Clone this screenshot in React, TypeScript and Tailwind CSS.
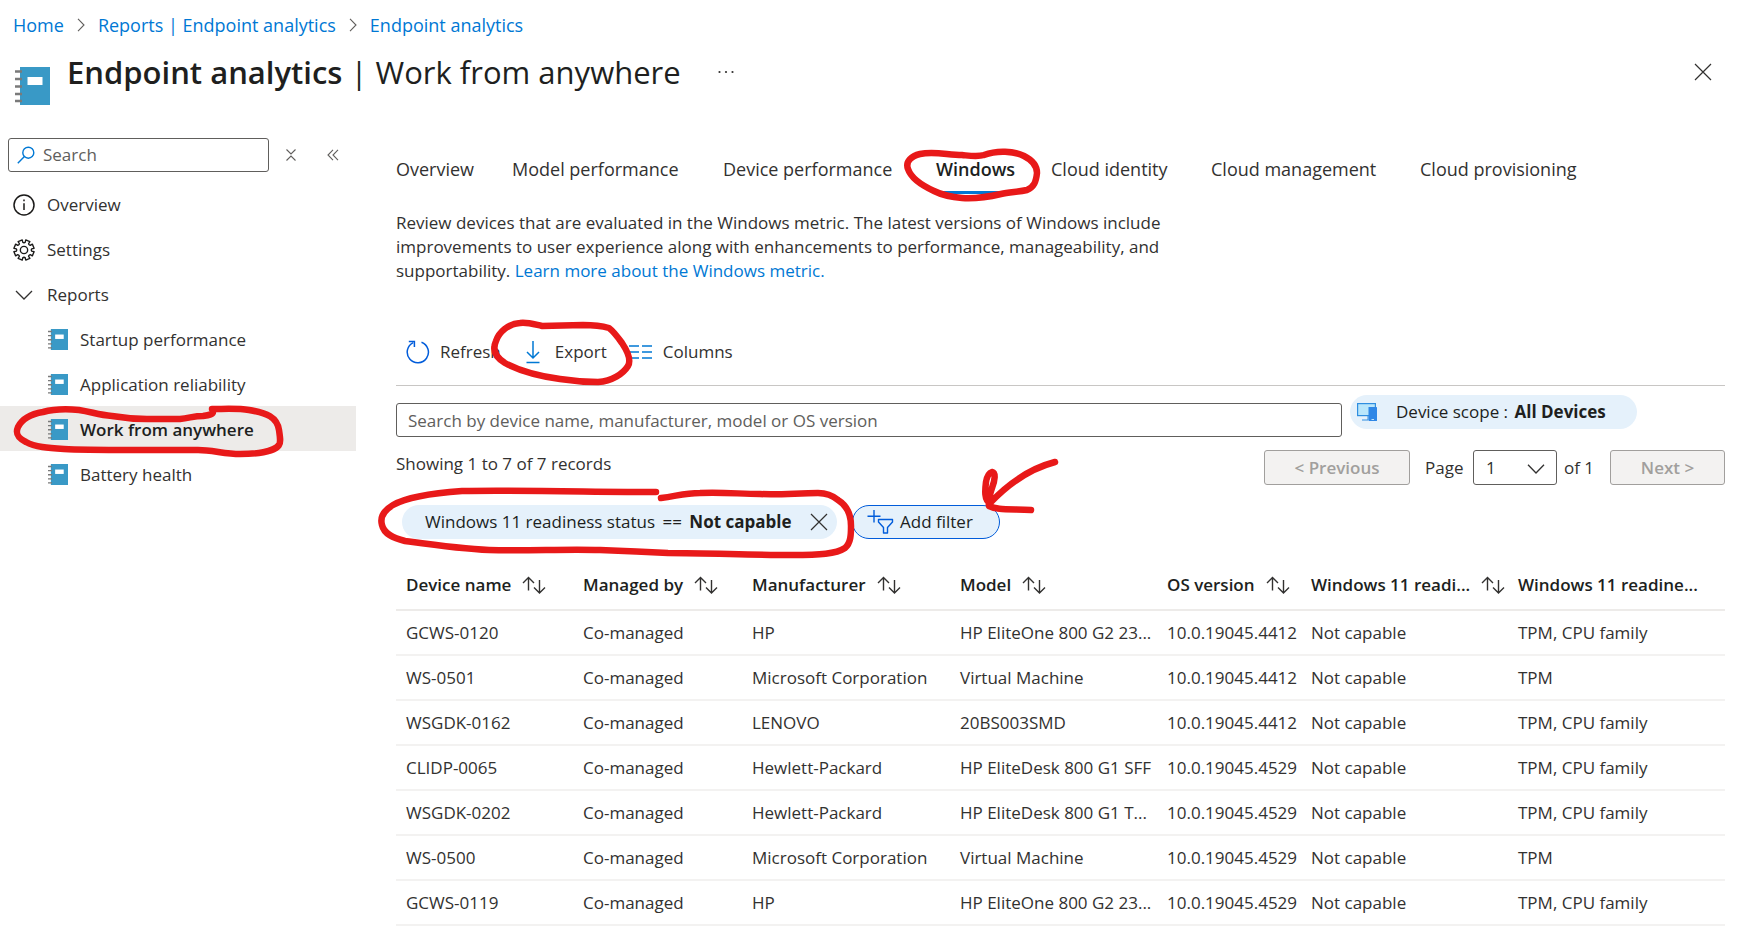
import { useState } from "react";
import type { ReactNode } from "react";
import clsx from "clsx";

type Device = {
  name: string;
  managedBy: string;
  manufacturer: string;
  model: string;
  osVersion: string;
  readiness: string;
  reason: string;
};

const devices: Device[] = [
  {
    name: "GCWS-0120",
    managedBy: "Co-managed",
    manufacturer: "HP",
    model: "HP EliteOne 800 G2 23...",
    osVersion: "10.0.19045.4412",
    readiness: "Not capable",
    reason: "TPM, CPU family",
  },
  {
    name: "WS-0501",
    managedBy: "Co-managed",
    manufacturer: "Microsoft Corporation",
    model: "Virtual Machine",
    osVersion: "10.0.19045.4412",
    readiness: "Not capable",
    reason: "TPM",
  },
  {
    name: "WSGDK-0162",
    managedBy: "Co-managed",
    manufacturer: "LENOVO",
    model: "20BS003SMD",
    osVersion: "10.0.19045.4412",
    readiness: "Not capable",
    reason: "TPM, CPU family",
  },
  {
    name: "CLIDP-0065",
    managedBy: "Co-managed",
    manufacturer: "Hewlett-Packard",
    model: "HP EliteDesk 800 G1 SFF",
    osVersion: "10.0.19045.4529",
    readiness: "Not capable",
    reason: "TPM, CPU family",
  },
  {
    name: "WSGDK-0202",
    managedBy: "Co-managed",
    manufacturer: "Hewlett-Packard",
    model: "HP EliteDesk 800 G1 T...",
    osVersion: "10.0.19045.4529",
    readiness: "Not capable",
    reason: "TPM, CPU family",
  },
  {
    name: "WS-0500",
    managedBy: "Co-managed",
    manufacturer: "Microsoft Corporation",
    model: "Virtual Machine",
    osVersion: "10.0.19045.4529",
    readiness: "Not capable",
    reason: "TPM",
  },
  {
    name: "GCWS-0119",
    managedBy: "Co-managed",
    manufacturer: "HP",
    model: "HP EliteOne 800 G2 23...",
    osVersion: "10.0.19045.4529",
    readiness: "Not capable",
    reason: "TPM, CPU family",
  },
];

const columns: { key: keyof Device; label: string; width: string; sortable: boolean }[] = [
  { key: "name", label: "Device name", width: "w-[177px]", sortable: true },
  { key: "managedBy", label: "Managed by", width: "w-[169px]", sortable: true },
  { key: "manufacturer", label: "Manufacturer", width: "w-[208px]", sortable: true },
  { key: "model", label: "Model", width: "w-[207px]", sortable: true },
  { key: "osVersion", label: "OS version", width: "w-[144px]", sortable: true },
  { key: "readiness", label: "Windows 11 readi...", width: "w-[207px]", sortable: true },
  { key: "reason", label: "Windows 11 readine...", width: "", sortable: false },
];

const tabs = [
  { label: "Overview", width: "w-[116px]" },
  { label: "Model performance", width: "w-[211px]" },
  { label: "Device performance", width: "w-[213px]" },
  { label: "Windows", width: "w-[115px]" },
  { label: "Cloud identity", width: "w-[160px]" },
  { label: "Cloud management", width: "w-[209px]" },
  { label: "Cloud provisioning", width: "w-[180px]" },
];

const reports = [
  "Startup performance",
  "Application reliability",
  "Work from anywhere",
  "Battery health",
];

export default function App() {
  return (
    <div className="relative min-h-screen overflow-hidden bg-white font-['Segoe_UI','Open_Sans',sans-serif] text-[17px] leading-6 text-[#323130]">
      <PageHeader />
      <div className="flex items-start">
        <Sidebar />
        <main className="min-w-0 flex-1 pr-[13px] pl-10">
          <MetricTabs />
          <p className="mt-[17px] max-w-[800px]">
            Review devices that are evaluated in the Windows metric. The latest versions of Windows
            include
            <br />
            improvements to user experience along with enhancements to performance, manageability,
            and
            <br />
            supportability.{" "}
            <a href="#learn-more" className="text-[#0078d4]">
              Learn more about the Windows metric.
            </a>
          </p>
          <Toolbar />
          <DeviceSearch />
          <Pager />
          <Filters />
          <DeviceTable />
        </main>
      </div>
      <Markup />
    </div>
  );
}

function PageHeader() {
  return (
    <header className="h-[136px]">
      <nav aria-label="Breadcrumb" className="flex items-center gap-3 pt-[13px] pl-[13px] text-lg leading-6">
        <a href="#home" className="text-[#0078d4]">
          Home
        </a>
        <CrumbArrow />
        <a href="#reports" className="text-[#0078d4]">
          Reports | Endpoint analytics
        </a>
        <CrumbArrow />
        <a href="#endpoint-analytics" className="text-[#0078d4]">
          Endpoint analytics
        </a>
      </nav>
      <div className="mt-0.5 flex items-center pr-[26px] pl-[15px]">
        <NotebookIcon className="mt-7 h-[38px] w-[35px]" />
        <h1 className="ml-[17px] text-[31px] leading-[48px] text-[#201f1e]">
          <span className="font-semibold">Endpoint analytics</span> | Work from anywhere
        </h1>
        <button type="button" aria-label="More actions" className="ml-9">
          <svg viewBox="0 0 18 4" className="h-1 w-[18px]" fill="#323130">
            <circle cx="2.500" cy="2" r="1.100" />
            <circle cx="9" cy="2" r="1.100" />
            <circle cx="15.500" cy="2" r="1.100" />
          </svg>
        </button>
        <button type="button" aria-label="Close" className="ml-auto">
          <CloseIcon className="h-[18px] w-[18px]" />
        </button>
      </div>
    </header>
  );
}

function Sidebar() {
  return (
    <aside className="w-[356px] shrink-0 pt-0.5">
      <div className="flex items-center pl-2">
        <label className="flex h-[34px] w-[261px] items-center gap-2 rounded-[3px] border border-[#605e5c] pl-2">
          <svg viewBox="0 0 18 18" className="h-[18px] w-[18px] shrink-0" fill="none" stroke="#0078d4" strokeWidth="1.400">
            <circle cx="11.300" cy="6.700" r="5.500" />
            <path d="M7.400 10.600 L0.800 17.200" />
          </svg>
          <input
            type="search"
            aria-label="Search"
            placeholder="Search"
            className="w-full bg-transparent outline-none placeholder:text-[#605e5c]"
          />
        </label>
        <button type="button" aria-label="Collapse groups" className="ml-4">
          <svg viewBox="0 0 12 14" className="h-3.5 w-3" fill="none" stroke="#605e5c" strokeWidth="1.100">
            <path d="M1.500 1.500 L6 6 L10.500 1.500 M1.500 12.500 L6 8 L10.500 12.500" />
          </svg>
        </button>
        <button type="button" aria-label="Collapse menu" className="ml-[30px]">
          <svg viewBox="0 0 12 12" className="h-3 w-3" fill="none" stroke="#605e5c" strokeWidth="1.100">
            <path d="M6 0.800 L1 6 L6 11.200 M11 0.800 L6 6 L11 11.200" />
          </svg>
        </button>
      </div>
      <nav aria-label="Menu" className="mt-[9px]">
        <NavItem icon={<InfoIcon />} label="Overview" />
        <NavItem icon={<GearIcon />} label="Settings" />
        <button type="button" className="flex h-[45px] w-full items-center gap-3 pt-0.5 pl-[13px]">
          <span className="flex w-[22px] justify-center">
            <svg viewBox="0 0 18 10" className="h-2.5 w-[18px]" fill="none" stroke="#323130" strokeWidth="1.300">
              <path d="M1 1 L9 9 L17 1" />
            </svg>
          </span>
          Reports
        </button>
        {reports.map((label) => (
          <a
            key={label}
            href="#report"
            className={clsx(
              "flex h-[45px] items-center gap-3 pt-0.5 pl-12",
              label === "Work from anywhere" && "bg-[#edebe9] font-semibold text-[#201f1e]",
            )}
          >
            <NotebookIcon className="h-[21px] w-5" />
            {label}
          </a>
        ))}
      </nav>
    </aside>
  );
}

function NavItem({ icon, label }: { icon: ReactNode; label: string }) {
  return (
    <a href="#menu" className="flex h-[45px] items-center gap-3 pt-[3px] pl-[13px]">
      {icon}
      {label}
    </a>
  );
}

function MetricTabs() {
  const [active, setActive] = useState("Windows");

  return (
    <div role="tablist" className="flex pt-[21px] text-lg leading-6">
      {tabs.map(({ label, width }) => (
        <div key={label} className={clsx("shrink-0", width)}>
          <button
            type="button"
            role="tab"
            aria-selected={active === label}
            onClick={() => setActive(label)}
            className={clsx(
              "border-b-[3px] pb-2.5 whitespace-nowrap",
              active === label
                ? "border-[#0078d4] font-semibold text-[#201f1e]"
                : "border-transparent",
            )}
          >
            {label}
          </button>
        </div>
      ))}
    </div>
  );
}

function Toolbar() {
  return (
    <div className="mt-[38px] flex h-[65px] items-center border-b border-[#c8c6c4] pb-[3px] pl-2.5">
      <button type="button" className="flex items-center gap-2.5">
        <svg viewBox="0 0 24 24" className="h-6 w-6" fill="none" stroke="#015cda" strokeWidth="1.500">
          <path d="M15.500 2.200 A10.600 10.600 0 1 1 7.200 2.600" />
          <path d="M2.800 1.600 H8.400 V7" />
        </svg>
        Refresh
      </button>
      <button type="button" className="ml-[25px] flex items-center gap-[15px]">
        <svg viewBox="0 0 14 24" className="h-6 w-3.5" fill="none" stroke="#0078d4" strokeWidth="1.500">
          <path d="M7 1 V18 M1 12 L7 18 L13 12 M0.500 22.500 H13.500" />
        </svg>
        Export
      </button>
      <button type="button" className="ml-[22px] flex items-center gap-[11px]">
        <svg viewBox="0 0 23 16" className="h-4 w-[23px]" fill="none" stroke="#0078d4" strokeWidth="1.500">
          <path d="M0 2 H10 M13 2 H23 M0 8 H10 M13 8 H23 M0 14 H10 M13 14 H23" />
        </svg>
        Columns
      </button>
    </div>
  );
}

function DeviceSearch() {
  return (
    <div className="mt-[9px] flex items-start gap-2 pr-[88px]">
      <input
        type="search"
        aria-label="Search devices"
        placeholder="Search by device name, manufacturer, model or OS version"
        className="mt-2 h-[34px] min-w-0 flex-1 rounded-[3px] border border-[#605e5c] px-[11px] outline-none placeholder:text-[#605e5c]"
      />
      <button
        type="button"
        className="flex h-[34px] w-[287px] items-center gap-[19px] rounded-full bg-[#e5f1fb] pl-[7px] whitespace-nowrap text-[#201f1e]"
      >
        <svg viewBox="0 0 20 18" className="h-[18px] w-5 shrink-0">
          <rect x="0.600" y="0.600" width="17.800" height="12" fill="#b9e6fb" stroke="#2f8ee0" strokeWidth="1.200" />
          <path d="M5 17 H11 V13" fill="none" stroke="#2f8ee0" strokeWidth="1" />
          <rect x="11.500" y="4" width="8.500" height="14" rx="0.600" fill="#2f87e6" />
          <rect x="14.500" y="16" width="2.500" height="1" fill="#c3e4fb" />
        </svg>
        <span>
          Device scope : <b className="ml-0.5">All Devices</b>
        </span>
      </button>
    </div>
  );
}

function Pager() {
  return (
    <div className="mt-[13px] flex h-[35px] items-center">
      <span className="pb-[7px]">Showing 1 to 7 of 7 records</span>
      <button
        type="button"
        disabled
        className="ml-auto h-[35px] w-[146px] rounded-[3px] border border-[#a19f9d] bg-[#f3f2f1] font-semibold text-[#a19f9d]"
      >
        &lt; Previous
      </button>
      <label htmlFor="page" className="ml-[15px] w-12">
        Page
      </label>
      <span className="relative">
        <select
          id="page"
          className="h-[35px] w-[84px] appearance-none rounded-[3px] border border-[#605e5c] bg-white pl-3 text-[#323130]"
        >
          <option>1</option>
        </select>
        <svg
          viewBox="0 0 18 10"
          className="pointer-events-none absolute top-3.5 right-3 h-2.5 w-[18px]"
          fill="none"
          stroke="#323130"
          strokeWidth="1.300"
        >
          <path d="M1 0.800 L9 9 L17 0.800" />
        </svg>
      </span>
      <span className="w-[53px] pl-[7px]">of 1</span>
      <button
        type="button"
        disabled
        className="h-[35px] w-[115px] rounded-[3px] border border-[#a19f9d] bg-[#f3f2f1] font-semibold text-[#a19f9d]"
      >
        Next &gt;
      </button>
    </div>
  );
}

function Filters() {
  return (
    <div className="mt-5 flex gap-[15px] pl-1.5 text-[#201f1e]">
      <div className="flex h-[34px] w-[435px] items-center justify-between rounded-full bg-[#e5f1fb] pr-[9px] pl-[23px] whitespace-nowrap">
        <span>
          Windows 11 readiness status <span className="mx-[3px]">==</span> <b>Not capable</b>
        </span>
        <button type="button" aria-label="Remove filter">
          <CloseIcon className="h-[18px] w-[18px]" />
        </button>
      </div>
      <button
        type="button"
        className="flex h-[34px] w-[148px] items-center gap-1.5 rounded-full border border-[#015cda] bg-[#e5f1fb] pl-3.5 whitespace-nowrap"
      >
        <svg viewBox="0 0 27 26" className="h-[26px] w-[27px]" fill="none" stroke="#015cda" strokeWidth="1.400">
          <path d="M7 1 V13.500 M0.500 7.200 H13.500" />
          <path d="M11.500 10.500 H25.500 V13 L20.500 18.500 V24 H16.500 V18.500 L11.500 13 Z" strokeLinejoin="round" />
        </svg>
        Add filter
      </button>
    </div>
  );
}

function DeviceTable() {
  return (
    <table className="mt-[22px] w-full table-fixed border-collapse text-left whitespace-nowrap">
      <thead>
        <tr className="border-b-2 border-[#edebe9]">
          {columns.map((column) => (
            <th
              key={column.key}
              scope="col"
              className={clsx("h-[49px] pl-2.5 font-semibold text-[#201f1e]", column.width)}
            >
              {column.sortable ? (
                <button type="button" className="flex items-center gap-[11px]">
                  {column.label}
                  <SortIcon />
                </button>
              ) : (
                column.label
              )}
            </th>
          ))}
        </tr>
      </thead>
      <tbody>
        {devices.map((device) => (
          <tr key={device.name} className="border-b-2 border-[#f3f2f1]">
            {columns.map((column) => (
              <td key={column.key} className="h-[45px] pt-px pl-2.5">
                {device[column.key]}
              </td>
            ))}
          </tr>
        ))}
      </tbody>
    </table>
  );
}

function NotebookIcon({ className }: { className: string }) {
  return (
    <svg viewBox="0 0 35 38" preserveAspectRatio="none" className={clsx("shrink-0", className)}>
      <rect x="5" y="0" width="30" height="38" fill="#3999c6" />
      <rect x="12.500" y="10" width="15" height="8" fill="#fff" />
      <path d="M0 4.500 H7 M0 12 H7 M0 19.500 H7 M0 27 H7 M0 34 H7" stroke="#7a7a7a" strokeWidth="2.400" />
    </svg>
  );
}

function CrumbArrow() {
  return (
    <svg viewBox="0 0 8 14" className="mx-px h-3.5 w-2" fill="none" stroke="#605e5c" strokeWidth="1.100">
      <path d="M1 0.800 L7 7 L1 13.200" />
    </svg>
  );
}

function CloseIcon({ className }: { className: string }) {
  return (
    <svg viewBox="0 0 18 18" className={className} fill="none" stroke="#323130" strokeWidth="1.200">
      <path d="M1 1 L17 17 M17 1 L1 17" />
    </svg>
  );
}

function InfoIcon() {
  return (
    <svg viewBox="0 0 22 22" className="h-[22px] w-[22px]" fill="none" stroke="#1b1a19" strokeWidth="1.500">
      <circle cx="11" cy="11" r="10" />
      <path d="M11 9.200 V16" />
      <path d="M11 5.500 V7.200" />
    </svg>
  );
}

function GearIcon() {
  return (
    <svg viewBox="0 0 24 24" className="h-[22px] w-[22px]" fill="none" stroke="#1b1a19" strokeWidth="1.500" strokeLinejoin="round">
      <circle cx="12" cy="12" r="4" />
      <path d="M10.100 1 L10.700 3.600 L12 4.100 L13.300 3.600 L13.900 1 L18.400 2.900 L17 5.200 L17.700 6.300 L18.800 7 L21.100 5.600 L23 10.100 L20.400 10.700 L19.900 12 L20.400 13.300 L23 13.900 L21.100 18.400 L18.800 17 L17.700 17.700 L17 18.800 L18.400 21.100 L13.900 23 L13.300 20.400 L12 19.900 L10.700 20.400 L10.100 23 L5.600 21.100 L7 18.800 L6.300 17.700 L5.200 17 L2.900 18.400 L1 13.900 L3.600 13.300 L4.100 12 L3.600 10.700 L1 10.100 L2.900 5.600 L5.200 7 L6.300 6.300 L7 5.200 L5.600 2.900 Z" />
    </svg>
  );
}

function SortIcon() {
  return (
    <svg viewBox="0 0 24 18" className="h-[18px] w-6" fill="none" stroke="#323130" strokeWidth="1.400">
      <path d="M6.500 14.500 V1.500 M1 7 L6.500 1.500 L12 7" />
      <path d="M17.500 4 V17 M12 11.500 L17.500 17 L23 11.500" />
    </svg>
  );
}

// Hand-drawn marker strokes laid over the page
function Markup() {
  return (
    <svg
      aria-hidden="true"
      viewBox="0 0 1738 932"
      className="pointer-events-none absolute top-0 left-0 h-[932px] w-[1738px] max-w-none"
      fill="none"
      stroke="#e81919"
      strokeWidth="6.500"
      strokeLinecap="round"
      strokeLinejoin="round"
    >
      <path d="M212 409 C224 409 238 408 249 410 C267 413 277 417 279 430 C280 437 281 442 279 445 C274 452 255 454 240 454 C225 454 212 450 198 450 L133 450 C108 450 80 450 64 449 C48 448 35 447 26 442 C18 438 15 434 18 427 C22 419 31 414 43 412 C54 409 68 409 79 410 C92 412 99 415 112 416 C124 418 135 419 147 419 L180 419 C190 418 194 416 203 416 C210 415 213 414 213 412" />
      <path d="M984 155 C997 150 1014 151 1024 156 C1036 162 1037 169 1037 173 C1036 182 1034 187 1027 190 C1018 192 1009 192 1001 194 C988 197 975 199 962 198 C950 197 942 195 934 191 C921 185 911 178 908 169 C905 161 912 156 920 154 C934 151 948 155 962 155 C972 156 978 157 984 155" />
      <path d="M542 326 C533 324 527 322 520 323 C508 324 499 332 496 341 C492 350 495 357 505 363 C518 370 539 376 560 379 C573 381 587 382 598 382 C612 381 623 374 628 366 C632 359 626 349 622 343 C617 336 613 331 609 328 C602 326 592 325 583 325 L542 326" />
      <path d="M656 492 C600 492 520 490 462 491 C434 493 407 497 393 505 C383 511 380 518 382 525 C384 534 393 538 405 541 C434 545 462 549 489 550 C530 551 562 549 600 550 C626 551 643 552 668 553 C709 553 750 555 792 555 C820 555 836 554 845 548 C851 543 851 534 851 526 C851 514 846 505 838 500 C832 495 827 493 818 493 C798 493 780 495 760 494 C740 494 724 492 700 493 C684 493 677 496 661 498" />
      <path d="M1055 462 C1032 468 1010 482 990 503 C984 500 985 490 986 482 C987 476 989 473 992 472 C996 473 995 480 992 488 C990 494 988 500 989 506 C997 510 1007 509 1031 510" />
    </svg>
  );
}
